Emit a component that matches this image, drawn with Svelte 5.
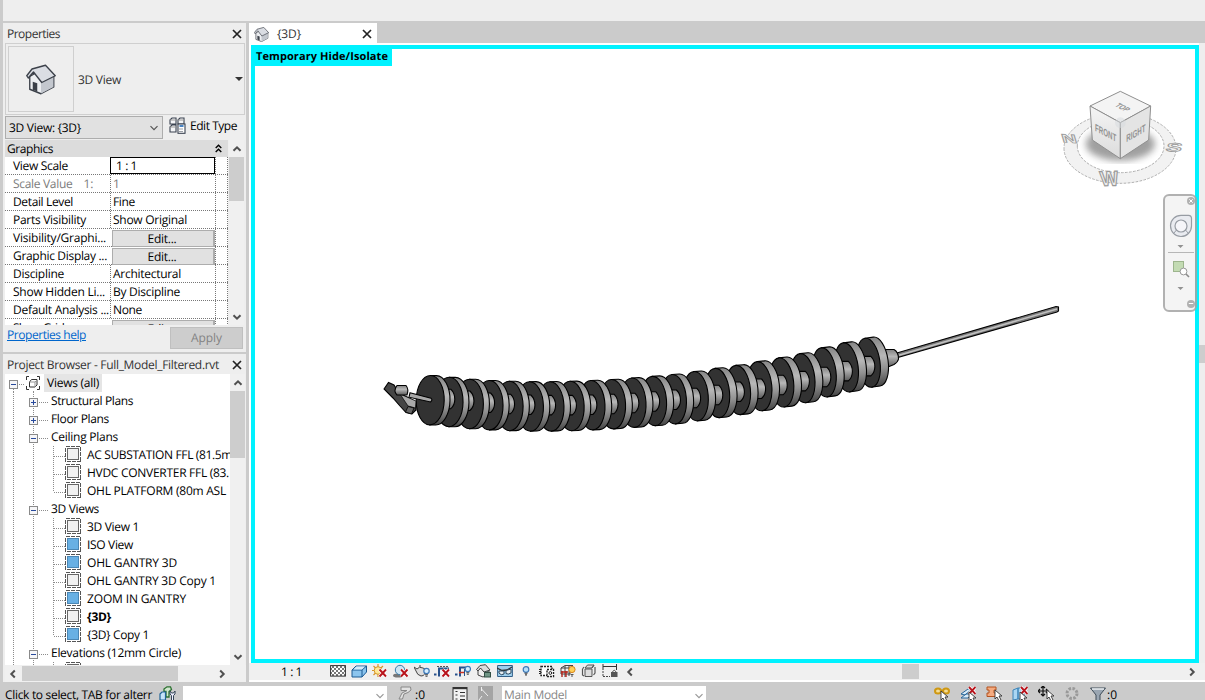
<script>
  function fit(node, width) {
    if (!width) return;
    const now = node.getBoundingClientRect().width;
    node.style.letterSpacing = (width - now) / node.textContent.length + 'px';
  }

  const rows = [
    ['View Scale', 55, '1 : 1', 21, 'input'],
    ['Scale Value    1:', 80, '1', 0, 'muted'],
    ['Detail Level', 60, 'Fine', 22, ''],
    ['Parts Visibility', 73, 'Show Original', 74, ''],
    ['Visibility/Graphi...', 93, 'Edit...', 29, 'button'],
    ['Graphic Display ...', 94, 'Edit...', 29, 'button'],
    ['Discipline', 51, 'Architectural', 68, ''],
    ['Show Hidden Li...', 92, 'By Discipline', 67, ''],
    ['Default Analysis ...', 96, 'None', 29, ''],
    ['Show Grids', 56, 'Edit...', 29, 'button']
  ];

  const tree = [
    { l: 0, t: 'Views (all)', w: 52, k: '-' },
    { l: 1, t: 'Structural Plans', w: 82, k: '+' },
    { l: 1, t: 'Floor Plans', w: 58, k: '+' },
    { l: 1, t: 'Ceiling Plans', w: 67, k: '-' },
    { l: 2, t: 'AC SUBSTATION FFL (81.5m', w: 145 },
    { l: 2, t: 'HVDC CONVERTER FFL (83.', w: 142 },
    { l: 2, t: 'OHL PLATFORM (80m ASL', w: 139, end: true },
    { l: 1, t: '3D Views', w: 48, k: '-' },
    { l: 2, t: '3D View 1', w: 52 },
    { l: 2, t: 'ISO View', w: 46, on: true },
    { l: 2, t: 'OHL GANTRY 3D', w: 90, on: true },
    { l: 2, t: 'OHL GANTRY 3D Copy 1', w: 129 },
    { l: 2, t: 'ZOOM IN GANTRY', w: 99, on: true },
    { l: 2, t: '{3D}', w: 24, bold: true },
    { l: 2, t: '{3D} Copy 1', w: 62, on: true, end: true },
    { l: 1, t: 'Elevations (12mm Circle)', w: 130, k: '-' },
    { l: 2, t: '', w: 0 }
  ];

  const edges = [450, 469, 489.5, 509.3, 529.5, 550, 570.7, 591, 612, 632.7, 653.3, 674, 694, 716, 737.5, 758.5, 780, 802, 823.3, 844.7, 867, 889];
  const tops = [375.5, 377.3, 379.3, 380.5, 381.3, 381.7, 381.7, 381.3, 380.5, 379.5, 378, 376.3, 374.5, 371.5, 368.3, 365.3, 361.5, 357.7, 353.5, 347.7, 342.7, 338];
  const discs = edges.map((e, i) => {
    const f = i / 21;
    const rx = 14 - 2.5 * f;
    const t = 5.8 + 2.4 * f;
    return { x: e - t - rx - 0.8 * f, y: tops[i] + 24.7, rx, t, rot: 1 - 9 * f, hub: 4.8 + 3.2 * f, edge: e };
  }).reverse();
</script>

{#snippet closeX()}
  <svg width="10" height="10" viewBox="0 0 10 10"><path d="M1 1L9 9M9 1L1 9" stroke="#222" stroke-width="1.7" /></svg>
{/snippet}

{#snippet chev(dir, c = '#505050', s = 2)}
  <svg width="10" height="10" viewBox="0 0 10 10"><path d="M1.5 6.8L5 3.3L8.5 6.8" fill="none" stroke={c} stroke-width={s} transform="rotate({dir} 5 5)" /></svg>
{/snippet}

{#snippet redX(x, y)}
  <path d="M{x} {y}l6.5 7M{x + 6.5} {y}l-6.5 7" stroke="#fff" stroke-width="3.4" />
  <path d="M{x} {y}l6.5 7M{x + 6.5} {y}l-6.5 7" stroke="#b8141c" stroke-width="1.9" />
{/snippet}

{#snippet pointer(x, y)}
  <path d="M{x} {y}v9l2-2 2 4 2-1-2-4h3z" fill="#fff" stroke="#333" stroke-width=".9" />
{/snippet}

{#snippet bulb(x, y, r, fill)}
  <circle cx={x} cy={y} r={r} {fill} stroke="#3c78b8" stroke-width="1.2" />
  <path d="M{x - 1.5} {y + r + 1}h3M{x - 1} {y + r + 2.6}h2" stroke="#444" stroke-width="1.1" />
{/snippet}

{#snippet house()}
  <path d="M5 16V33L20 39L37 30V15L24 5Z" fill="#eceef1" stroke="#3b4049" stroke-width="1.8" stroke-linejoin="round" />
  <path d="M20 24L36.5 16V30L20 38.5Z" fill="#c3c7ce" />
  <path d="M1 15L8 6L26 1L39 15L21 24L10 10L3 18Z" fill="#dadde3" stroke="#3b4049" stroke-width="1.8" stroke-linejoin="round" />
  <path d="M9 23L15 25V36L9 33.5Z" fill="#3b4049" />
{/snippet}

<div class="app">
  <div class="ribbon"></div>
  <div class="main">
    <aside>
      <section class="props">
        <header><span use:fit={53}>Properties</span>{@render closeX()}</header>
        <div class="type">
          <div class="thumb"><svg width="30" height="31" viewBox="0 0 40 40">{@render house()}</svg></div>
          <span use:fit={43}>3D View</span>
          <i class="drop"></i>
        </div>
        <div class="pick">
          <div class="combo"><span use:fit={72}>3D View: {'{3D}'}</span>{@render chev(180, '#555', 1.2)}</div>
          <svg class="et" width="17" height="17" viewBox="0 0 17 17" fill="#f4f5f7" stroke="#3a4250" stroke-width="1.1">
            <path d="M1 3L3 1H7V7H1ZM9 3L11 1H15V7H9ZM1 10L3 8H7V15H1Z" /><path d="M1 3H7M9 3H15M1 10H7" stroke="#999" />
            <rect x="9" y="7" width="7" height="9.3" fill="#fff" /><path d="M10.5 9h4" stroke="#1b64b5" stroke-width="1.6" /><path d="M10.5 12h4M10.5 14.5h4" stroke-dasharray="1 1" />
          </svg>
          <span class="edit" use:fit={47}>Edit Type</span>
        </div>
        <div class="gridwrap">
          <div class="table">
            <div class="group"><span use:fit={46}>Graphics</span>
              <svg width="7" height="9" viewBox="0 0 7 9"><path d="M.7 4L3.5 1.2L6.3 4M.7 8L3.5 5.2L6.3 8" fill="none" stroke="#000" stroke-width="1.4" /></svg>
            </div>
            {#each rows as [name, w, value, vw, kind]}
              <div class="row {kind}">
                <div class="name"><span use:fit={w}>{name}</span></div>
                <div class="value"><span use:fit={vw}>{value}</span></div>
                <div class="tail"></div>
              </div>
            {/each}
          </div>
          <div class="vbar"><div class="arrow">{@render chev(0)}</div><div class="knob k1"></div><div class="arrow end">{@render chev(180)}</div></div>
        </div>
        <footer><a href="#help"><span use:fit={79}>Properties help</span></a><div class="apply"><span use:fit={31}>Apply</span></div></footer>
      </section>

      <section class="browser">
        <header><span use:fit={212}>Project Browser - Full_Model_Filtered.rvt</span>{@render closeX()}</header>
        <div class="treewrap">
          <div class="tree">
            {#each tree as n, i}
              <div class="node">
                <svg width={[42, 46, 82][n.l]} height="18" shape-rendering="crispEdges">
                  <g stroke="#8c8c8c" stroke-dasharray="1 1" fill="none">
                    <path d="M8.5 {i ? 0 : 15}V18" />
                    <path d="M28.5 {i ? 0 : 17}V18" />
                    {#if n.l === 2}<path d="M48.5 0V{n.end ? 10 : 18}M49 10.5H60" />{/if}
                    {#if n.l === 1}<path d="M34 10.5H44" />{/if}
                    {#if n.l === 0}<path d="M14 10.5H19" />{/if}
                  </g>
                  {#if n.k}
                    <g transform="translate({n.l ? 24 : 4} 6)">
                      <rect x=".5" y=".5" width="8" height="8" fill="#f6f6f8" stroke="#8a8a8a" />
                      <path d={n.k === '+' ? 'M2 4.5H7M4.5 2V7' : 'M2 4.5H7'} stroke="#284a9c" />
                    </g>
                  {/if}
                  {#if n.l === 2}
                    <rect x="60.5" y=".5" width="15" height="15" fill="#fff" stroke="#555" stroke-dasharray="4 1" />
                    <rect x="62.5" y="2.5" width="11" height="11" fill={n.on ? '#68b0e4' : '#f1f1f1'} stroke={n.on ? '#4a86b4' : '#666'} />
                  {/if}
                  {#if n.l === 0}
                    <g fill="none" stroke="#333" shape-rendering="auto"><path d="M24 2.5H21.5V6M21.5 12V15.5H24M32 2.5H34.5V6M34.5 12V15.5H32" />
                    <path d="M24.5 8L26.5 5.5H32V11L30 13H24.5Z" fill="#fff" /><path d="M24.5 8H30V13M30 8L32 6" stroke="#999" /></g>
                  {/if}
                </svg>
                {#if n.t}<span class:sel={n.l === 0} class:bold={n.bold}><span use:fit={n.w}>{n.t}</span></span>{/if}
              </div>
            {/each}
          </div>
          <div class="vbar"><div class="arrow">{@render chev(0)}</div><div class="knob k2"></div><div class="arrow end">{@render chev(180)}</div></div>
        </div>
        <div class="hbar">{@render chev(-90)}<div class="hknob"></div>{@render chev(90)}</div>
      </section>
    </aside>

    <div class="work">
      <div class="tabs">
        <div class="tab">
          <svg width="15" height="15" viewBox="0 0 40 40">{@render house()}</svg>
          <span use:fit={24}>{'{3D}'}</span>{@render closeX()}
        </div>
      </div>
      <div class="stage">
        <div class="view">
          <svg class="model" width="940" height="610" viewBox="255 49 940 610">
            <defs>
              <linearGradient id="rim" x1="0" y1="0" x2="0" y2="1"><stop offset="0" stop-color="#858585" /><stop offset=".4" stop-color="#b8b8b8" /><stop offset=".65" stop-color="#929292" /><stop offset="1" stop-color="#454545" /></linearGradient>
              <linearGradient id="hub" x1="0" y1="0" x2="0" y2="1"><stop offset="0" stop-color="#808080" /><stop offset=".4" stop-color="#b8b8b8" /><stop offset="1" stop-color="#5a5a5a" /></linearGradient>
            </defs>
            <g stroke="#000" stroke-width="1.1">
              <path d="M896 353.3L1056 306.5L1058.5 307V311L1057 312L896 358Z" fill="#777" />
              <path d="M899 355.2L1057 309" stroke="#c0c0c0" stroke-width="1.5" />
              <path d="M880 349.5H894Q898.5 352 898.5 359Q898 362 894 364.5L888 367H880Z" fill="url(#hub)" />
              {#each discs as d, i}
                {#if i > 0}
                  <path d="M{d.edge - 5} {d.y - 11}H{d.edge + d.hub - 4}Q{d.edge + d.hub} {d.y - 7} {d.edge + d.hub} {d.y - 1}T{d.edge + d.hub - 4} {d.y + 8.5}H{d.edge - 5}Z" fill="url(#hub)" />
                {/if}
                <g transform="translate({d.x} {d.y}) rotate({d.rot})">
                  <path d="M0 -24.7H{d.t}A{d.rx} 24.7 0 0 1 {d.t} 24.7H0Z" fill="url(#rim)" />
                  <ellipse rx={d.rx} ry="24.7" fill="#323232" />
                </g>
              {/each}
              <path d="M384 389L388.5 382.5L394 385L399 393L411 399L416 402V410L412 414L406 412.5L400 406L393 398Z" fill="#454545" />
              <path d="M400 394L416 401L415.5 408L408 406Z" fill="#aaa" stroke-width=".7" />
              <path d="M408 406.5L414 408L411.5 414L405.5 412Z" fill="#666" stroke-width=".8" />
              <path d="M397 385.5H406Q409 389 407 395H397Q393 391 397 385.5Z" fill="url(#hub)" />
              <path d="M410 392.8L431 398.2Q433 400 430.5 402L409 397.2Z" fill="#a8a8a8" />
            </g>
          </svg>
          <div class="hide"><span use:fit={132}>Temporary Hide/Isolate</span></div>

          <svg class="cube" width="155" height="120" viewBox="0 0 465 360">
            <defs><filter id="soft"><feGaussianBlur stdDeviation="11" /></filter>
            <linearGradient id="lf" x1="0" y1="0" x2="0" y2="1"><stop offset="0" stop-color="#f4f4f4" /><stop offset="1" stop-color="#dcdcdc" /></linearGradient></defs>
            <path d="M42 205a168 105 0 1 0 336 0a168 105 0 1 0 -336 0ZM82 198a130 80 0 1 0 260 0a130 80 0 1 0 -260 0Z" fill="#f2f2f2" fill-rule="evenodd" stroke="#b0b0b0" stroke-width="3" stroke-dasharray="8 4" />
            <ellipse cx="211" cy="192" rx="104" ry="50" fill="#777" opacity=".7" filter="url(#soft)" />
            <g stroke="#8f8f8f" stroke-width="3" stroke-linejoin="round">
              <path d="M211 34L302 78L211 128L120 78Z" fill="#f4f4f4" />
              <path d="M120 78L211 128V236L127 180Z" fill="url(#lf)" />
              <path d="M211 128L302 78L296 180L211 236Z" fill="#e4e4e4" />
            </g>
            <circle cx="211" cy="128" r="16" fill="#d5dade" opacity=".5" />
            <g class="cubetext">
              <text transform="matrix(.86 .46 0 1.35 135 152)" textLength="74" lengthAdjust="spacingAndGlyphs">FRONT</text>
              <text transform="matrix(.86 -.5 0 1.35 229 187)" textLength="67" lengthAdjust="spacingAndGlyphs">RIGHT</text>
              <text transform="matrix(.85 .42 -.95 .6 193 78)" textLength="42" lengthAdjust="spacingAndGlyphs">TOP</text>
            </g>
            <g class="compass">
              <text transform="matrix(1.6 -.05 .25 1.75 154 318)">W</text>
              <text transform="matrix(1.75 .1 .3 1 38 187)">N</text>
              <text transform="matrix(2 .05 -.3 1 345 214)">S</text>
            </g>
          </svg>

          <div class="nav">
            <svg width="34" height="118" viewBox="0 0 34 118">
              <rect x="1" y="1" width="32" height="116" rx="5" fill="#f3f3f3" stroke="#a4a4a4" stroke-width="2" />
              <g fill="#a4a4a4"><circle cx="28" cy="7" r="4" /><circle cx="28" cy="110" r="4" /></g>
              <path d="M26.3 5.3l3.4 3.4m0-3.4l-3.4 3.4M25.8 109.5h4.4" stroke="#fff" fill="none" />
              <path d="M18 21.3H25.5Q28.5 21.3 28.5 24.5V32a10.5 10.6 0 1 1-10.5-10.7Z" fill="#e6e8ee" stroke="#858b94" stroke-width="1.2" />
              <circle cx="18" cy="32" r="6" fill="#f4f4f8" stroke="#858b94" stroke-width="1.2" />
              <path d="M13.5 36L10.5 39.5M22.5 36L25.5 39.5" stroke="#858b94" />
              <path d="M14.5 51H20.5L17.5 54ZM14.5 93H20.5L17.5 96Z" fill="#808080" />
              <path d="M5 58.5H31" stroke="#aaa" />
              <rect x="10.5" y="67.5" width="10" height="10" fill="#b9d5a6" stroke="#8ca97a" />
              <circle cx="20.5" cy="77.5" r="3.4" fill="#fff" stroke="#888" /><path d="M23 80L26 83" stroke="#777" stroke-width="1.6" />
            </svg>
          </div>
        </div>
        <div class="gutter"><i></i></div>
      </div>

      <div class="viewbar">
        <div class="scale"><span use:fit={21}>1 : 1</span></div>
        <div class="vicons">
          <svg viewBox="0 0 16 16"><defs><pattern id="ck" width="4" height="4" patternUnits="userSpaceOnUse"><rect width="4" height="4" fill="#fff" /><path d="M0 0h2v2H0zM2 2h2v2H2z" fill="#777" /></pattern></defs><rect x=".6" y="1.6" width="14.8" height="10.5" fill="url(#ck)" stroke="#333" /></svg>
          <svg viewBox="0 0 16 16"><path d="M1 6L5 2H15.5V8L11 13H1Z" fill="#8cc5ee" stroke="#1c5a92" /><path d="M1 6H11V13M11 6L15.5 2" fill="none" stroke="#1c5a92" /><path d="M2.5 5.5L5.5 2.6H14L11 5.5Z" fill="#d6edfb" /></svg>
          <svg viewBox="0 0 16 16"><path d="M6 0V13M0 6.5H13M1.5 2L11 11M11 2L1.5 11" stroke="#d6952a" stroke-width="1.2" /><circle cx="6" cy="6.5" r="3.8" fill="#ffe895" stroke="#d6952a" />{@render redX(7.5, 5.5)}</svg>
          <svg viewBox="0 0 16 16"><ellipse cx="5" cy="11.5" rx="5" ry="2" fill="#777" /><circle cx="7" cy="6" r="4.7" fill="#cfe6f5" stroke="#3b7ba8" />{@render redX(8, 5.5)}</svg>
          <svg viewBox="0 0 16 16"><path d="M0 3L3 5Q5 2 9 4L11 5Q12 12 7 12Q3 11 2 7Z" fill="#ddd" stroke="#444" /><path d="M6 3V1" stroke="#444" />{@render bulb(12.5, 7, 2.7, '#d8efff')}</svg>
          <svg viewBox="0 0 16 16"><path d="M0 10.5H2.5M5 12.5V4.5H14V8" fill="none" stroke="#28518b" stroke-width="2" /><path d="M3 2.5H14" stroke="#555" stroke-dasharray="2 1" />{@render redX(8.5, 5.5)}</svg>
          <svg viewBox="0 0 16 16"><path d="M0 10.5H2.5M5 12.5V3.5H11" fill="none" stroke="#28518b" stroke-width="2" /><path d="M4 8.5H9" stroke="#c32" stroke-width="1.5" /><path d="M9.5 5V12" stroke="#28518b" />{@render bulb(12.8, 5, 2.7, '#d8efff')}</svg>
          <svg viewBox="0 0 16 16"><path d="M2 6V11L7 13L13 10V6L9 1Z" fill="#eee" stroke="#444" /><path d="M.5 5.5L4 1.5L9.5 .7L14 6L8 8L4.5 4L2 7Z" fill="#dcdcdc" stroke="#444" /><rect x="8.5" y="8.5" width="6" height="4.5" fill="#6f9484" stroke="#314e43" /><path d="M10 8.5Q11.5 5.5 13 8.5" fill="none" stroke="#314e43" /></svg>
          <svg viewBox="0 0 16 16"><path d="M.6 1.5H15.4V12.5H.6Z" fill="#9fd0ee" stroke="#336089" /><path d="M0 4L5 6.5L10 6L15 3" fill="none" stroke="#333" stroke-width="1.3" /><path d="M2 7H7V10Q4 12 2 9ZM9 6.5L14 5V9Q11 11 9 9.5Z" fill="#e8eef2" stroke="#29465e" /></svg>
          <svg viewBox="0 0 16 16">{@render bulb(8, 5.5, 2.8, '#b9e0fa')}</svg>
          <svg viewBox="0 0 16 16"><rect x="2" y="2.5" width="11" height="9" fill="#fff" stroke="#222" stroke-width="1.4" stroke-dasharray="2 1" /><path d="M1 5V10" stroke="#222" stroke-width="2" stroke-dasharray="1 1" /><rect x="8" y="5.5" width="6.5" height="7" fill="#fff" stroke="#222" stroke-width="1.4" stroke-dasharray="2 1" /><circle cx="11.3" cy="9" r="1.4" fill="none" stroke="#222" /></svg>
          <svg viewBox="0 0 16 16"><path d="M1 4L5 1.5H13M1 4H10V10H1ZM5 2V13M9 2V12" fill="none" stroke="#444" /><path d="M1 8H8M2 7V13M6 7V13" stroke="#b3261d" stroke-width="1.4" /><circle cx="12" cy="5.5" r="3.1" fill="#ffcf58" stroke="#d8851c" /><path d="M10.5 10.5H13.5M11 12H13" stroke="#555" /></svg>
          <svg viewBox="0 0 16 16"><path d="M4 4L6.5 1H13L11 4ZM4 5H11V12.5H4Z" fill="#ddd" stroke="#555" /><path d="M1.5 5V11L3 12M3 3L1.5 5M14 3V9L12.5 11M11 4L13 1" fill="none" stroke="#555" stroke-width="1.2" /></svg>
          <svg viewBox="0 0 16 16"><path d="M1 0V6M14.5 0V6M1 2.5H14" stroke="#333" /><path d="M1 7V13M1 12.5H8" stroke="#444" stroke-dasharray="2 1" /><rect x="9" y="8" width="6.5" height="5" fill="#555" /><path d="M10.5 8Q12.2 4.5 14 8" fill="none" stroke="#555" /></svg>
        </div>
        <div class="hs">{@render chev(-90)}<div class="thumbh"></div>{@render chev(90)}</div>
      </div>
    </div>
  </div>

  <div class="status">
    <span class="msg" use:fit={147}>Click to select, TAB for alterr</span>
    <svg class="i1" width="17" height="16" viewBox="0 0 17 16"><path d="M5 3L8 .8H11.5L12.5 3.5L10 5.5V11H7V5.5H5Z" fill="#cfe5cd" stroke="#2c7030" stroke-width="1.3" /><path d="M1 8L3 6H6.5V14H1Z" fill="#c6e2f8" stroke="#216496" stroke-width="1.2" /><path d="M11 5V8L12.5 9.5V15H14.5V9.5L16 8V5L14.5 7H12.5Z" fill="#eef" stroke="#345" /></svg>
    <div class="sfield f1">{@render chev(180, '#999', 1.2)}</div>
    <svg class="i2" width="14" height="14" viewBox="0 0 14 14"><path d="M3 1H12.5L13 4L10 6.5L6 8L4.5 13H1L4 7L9 4.5H3Z" fill="#e2e2e2" stroke="#888" /></svg>
    <span class="z1" use:fit={10}>:0</span>
    <svg class="i3" width="16" height="15" viewBox="0 0 16 15"><rect x="1" y="1.5" width="14" height="13" fill="#f2f2f2" stroke="#333" /><path d="M1 2.2H15" stroke="#333" stroke-width="2" /><path d="M3.5 5.5H5.5M8 6.5H13M3.5 9H5.5M8 10H13M3.5 13H5.5M8 13.5H13" stroke="#333" stroke-width="1.2" /></svg>
    <svg class="i4" width="15" height="15" viewBox="0 0 15 15"><rect width="15" height="15" fill="#a4a4a4" /><path d="M3.5 1V5M3.5 3L10 10M4 10L1 14" stroke="#eee" fill="none" /></svg>
    <div class="sfield f2"><span use:fit={63}>Main Model</span>{@render chev(180, '#999', 1.2)}</div>
    <div class="sicons">
      <svg viewBox="0 0 16 16"><path d="M6 5H10" stroke="#c28a10" stroke-width="2.4" /><ellipse cx="4" cy="5" rx="3" ry="2.5" fill="#f3dc96" stroke="#cf9812" stroke-width="2" /><ellipse cx="12" cy="5" rx="3" ry="2.5" fill="#f3dc96" stroke="#cf9812" stroke-width="2" />{@render pointer(7, 5)}</svg>
      <svg viewBox="0 0 16 16"><path d="M1 8L8 3H12L5 9ZM1 12L6 8H12L8 12Z" fill="#d7ebf8" stroke="#28679b" />{@render redX(9, 1)}{@render pointer(9, 6)}</svg>
      <svg viewBox="0 0 16 16"><path d="M1 1H10V4H8V7H10V10.5H1V7H3V4H1Z" fill="#f4ab80" stroke="#b4521f" />{@render pointer(9, 4)}</svg>
      <svg viewBox="0 0 16 16"><path d="M1 4L6 2V13L1 14ZM6 2H12V13H6Z" fill="#aad6f3" stroke="#3a83b8" />{@render redX(9, 1)}{@render pointer(8, 6)}</svg>
      <svg viewBox="0 0 16 16"><path d="M5 0V10M0 5H10M3 2L5 0L7 2M2 3L0 5L2 7M3 8L5 10L7 8M8 3L10 5L8 7" fill="none" stroke="#111" stroke-width="1.2" />{@render pointer(9, 4)}</svg>
      <svg viewBox="0 0 16 16"><circle cx="8" cy="7.5" r="5" fill="none" stroke="#999" stroke-width="3" stroke-dasharray="2.5 1.4" /></svg>
      <svg viewBox="0 0 16 16"><path d="M.5 2H15.5L10 9V15H6V9Z" fill="#9aa6b2" stroke="#3f4c58" /><path d="M2 3H14" stroke="#f2f5f7" stroke-width="1.4" /></svg>
      <span use:fit={10}>:0</span>
    </div>
  </div>
</div>

<style>
  :global(body) { margin: 0; overflow: hidden; }
  .app { width: 1205px; height: 700px; overflow: hidden; display: flex; flex-direction: column; background: #cbcbcb; font: 12px/18px "Open Sans", "Noto Sans", sans-serif; color: #000; text-rendering: geometricPrecision; }
  .app * { box-sizing: border-box; }
  span { white-space: pre; }
  svg { display: block; flex: none; }
  .ribbon { height: 21px; margin-left: 3px; background: #eee; flex: none; }
  .main { height: 661px; flex: none; display: flex; padding: 2px 0 0 3px; }
  aside { width: 243px; margin-right: 3px; display: flex; flex-direction: column; gap: 2px; }
  section { background: #eee; display: flex; flex-direction: column; }
  header { display: flex; align-items: center; justify-content: space-between; padding: 0 4px; height: 20px; color: #333; flex: none; }
  .browser header { padding-top: 2px; }
  .props { height: 329px; padding-top: 1px; overflow: hidden; }
  .type { height: 72px; margin: -1px 1px 0 2px; border: 1px solid #cfcfcf; display: flex; align-items: center; padding-left: 2px; color: #333; flex: none; }
  .type > span { padding-top: 2px; }
  .thumb { width: 66px; height: 66px; border: 1px solid #cfcfcf; margin-right: 4px; display: flex; align-items: center; justify-content: center; }
  .thumb svg { margin-right: 1px; }
  .drop { margin-left: auto; margin-right: 1px; border: 4px solid transparent; border-top-color: #333; border-bottom: 0; }
  .pick { display: flex; height: 25px; padding: 1px 0 0 2px; align-items: flex-start; flex: none; }
  .combo { width: 158px; height: 23px; background: #e1e1e1; border: 1px solid #adadad; display: flex; align-items: center; justify-content: space-between; padding: 0 3px; margin-right: 6px; }
  .et { margin-top: 1px; }
  .edit { margin: 1px 0 0 4px; }
  .gridwrap { display: flex; height: 185px; margin-left: 2px; overflow: hidden; flex: none; }
  .table { width: 223px; background: #fff; flex: none; }
  .group { height: 17px; background: #dcdcdc; display: flex; align-items: center; justify-content: space-between; padding: 0 6px 0 2px; }
  .row { display: flex; height: 18px; border-bottom: 1px dotted #777; line-height: 17px; }
  .name { width: 105px; padding-left: 8px; overflow: hidden; }
  .value { width: 105px; border-left: 1px dotted #777; padding-left: 2px; overflow: hidden; }
  .tail { width: 13px; border: 1px dotted #777; border-width: 0 1px; }
  .row.muted { color: #7c7c7c; }
  .row.input .value { border: 1px solid #000; padding-left: 5px; line-height: 15px; }
  .row.button .value { border: 2px solid #adadad; border-width: 1px 2px 1px 1px; background: #e1e1e1; text-align: center; margin: 1px 0 -1px 2px; width: 103px; padding: 0 2px 0 0; line-height: 16px; }
  .vbar { width: 15px; margin-left: 1px; background: #f0f0f0; display: flex; flex-direction: column; }
  .arrow { height: 17px; display: flex; align-items: center; justify-content: center; flex: none; }
  .arrow.end { margin-top: auto; }
  .knob { background: #cdcdcd; }
  .k1 { height: 44px; }
  .k2 { height: 67px; }
  footer { display: flex; justify-content: space-between; padding: 1px 3px 0 4px; }
  a { color: #0066cc; text-decoration: underline; }
  .apply { width: 73px; height: 22px; margin-top: 1px; background: #cdcdcd; border: 1px solid #bfbfbf; color: #838383; display: flex; justify-content: center; line-height: 20px; }
  .browser { height: 328px; }
  .treewrap { display: flex; height: 291px; margin-left: 2px; overflow: hidden; flex: none; }
  .tree { width: 225px; background: #fff; overflow: hidden; flex: none; }
  .browser .vbar { margin: 0; width: 15px; }
  .node { display: flex; height: 18px; overflow: hidden; }
  .sel { background: #e5e5e5; margin-left: -3px; padding: 0 3px; }
  .bold { font-weight: 700; }
  .hbar { height: 17px; margin-left: 2px; background: #f0f0f0; display: flex; align-items: center; padding: 0 3px; }
  .hknob { width: 156px; height: 15px; background: #cdcdcd; margin: 0 39px 0 4px; }
  .work { width: 956px; display: flex; flex-direction: column; }
  .tabs { height: 20px; }
  .tab { width: 128px; height: 20px; background: #fff; display: flex; align-items: center; padding: 2px 5px 0; color: #333; }
  .tab span { margin: 0 auto 0 8px; }
  .stage { height: 620px; display: flex; background: #fff; padding: 2px 0 0 2px; flex: none; }
  .view { width: 948px; height: 618px; border: 4px solid #00f2ff; background: #fff; position: relative; }
  .gutter { width: 6px; background: #eee; margin-top: -2px; padding-top: 302px; }
  .gutter i { display: block; height: 18px; background: #cdcdcd; }
  .hide { position: absolute; left: -4px; top: -4px; height: 21px; width: 141px; background: #00f2ff; font-weight: 700; font-size: 11px; line-height: 23px; padding-left: 5px; }
  .cube { position: absolute; left: 795px; top: 31px; }
  .cubetext { font: 700 23px "Liberation Sans", sans-serif; fill: #929292; }
  .compass { font: 700 36px "Liberation Sans", sans-serif; fill: #ececec; stroke: #999; stroke-width: 2; }
  .nav { position: absolute; left: 908px; top: 145px; opacity: .85; }
  .viewbar { height: 19px; background: #f0f0f0; border-bottom: 2px solid #fff; display: flex; align-items: center; flex: none; }
  .scale { padding-left: 32px; width: 81px; flex: none; }
  .vicons { display: flex; gap: 4.9px; height: 16px; flex: none; }
  .vicons svg { width: 16px; height: 16px; }
  .hs { margin-left: 7px; display: flex; align-items: center; width: 572px; }
  .thumbh { margin: 0 auto 0 267px; width: 17px; height: 15px; background: #cdcdcd; }
  .status { height: 18px; display: flex; align-items: flex-start; padding: 4px 0 0 5px; overflow: hidden; }
  .i1 { margin-left: 7px; }
  .sfield { height: 19px; background: #fff; color: #888; display: flex; align-items: center; justify-content: space-between; padding: 0 2px 0 2px; }
  .sfield span { margin-top: -2px; }
  .f1 { width: 204px; margin-left: 7px; justify-content: flex-end; }
  .i2 { margin-left: 11px; }
  .z1 { margin-left: 3px; }
  .i3 { margin-left: 27px; }
  .i4 { margin-left: 10px; }
  .f2 { width: 204px; margin-left: 9px; }
  .sicons { display: flex; gap: 10px; margin-left: 228px; }
  .sicons svg { width: 16px; height: 16px; }
  .sicons span { margin-left: -9px; }
</style>
